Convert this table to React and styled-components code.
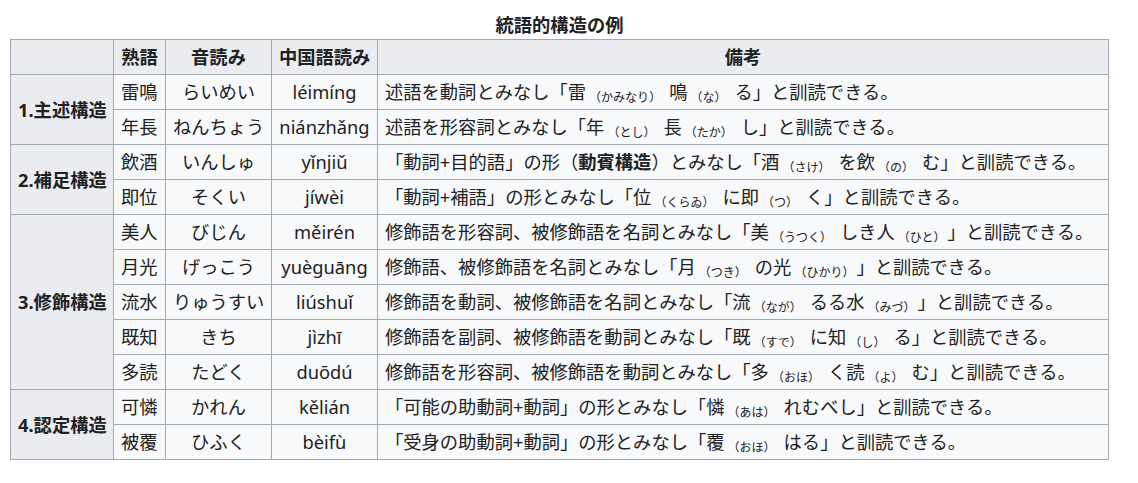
import React from "react";
import styled, { createGlobalStyle } from "styled-components";

const GlobalStyle = createGlobalStyle`
  html, body { margin: 0; padding: 0; background: #ffffff; }
  body {
    font-family: "Noto Sans", "Noto Sans CJK JP", sans-serif;
    color: #202122;
  }
`;

const Page = styled.div`
  padding: 11px 0 0 10px;
`;

const Table = styled.table`
  border-collapse: collapse;
  table-layout: fixed;
  width: 1099px;
  background: #f8f9fa;
  color: #202122;
  font-size: 18.3px;
  line-height: 28px;
  border: 1px solid #a2a9b1;
`;

const Caption = styled.caption`
  font-weight: bold;
  text-align: center;
  line-height: 28px;
`;

const Col = styled.col`
  width: ${(p) => (p.$w ? `${p.$w}px` : "auto")};
`;

const HeadCell = styled.th`
  background: #eaecf0;
  border: 1px solid #a2a9b1;
  padding: 3px 7px;
  font-weight: bold;
  text-align: center;
  vertical-align: middle;
  white-space: nowrap;
`;

const Cell = styled.td`
  border: 1px solid #a2a9b1;
  padding: 3px 7px;
  text-align: ${(p) => p.$align || "left"};
  vertical-align: middle;
  white-space: nowrap;
`;

const Reading = styled.span`
  font-size: 12px;
  line-height: 1;
  vertical-align: -3px;
  margin: 0 8px 0 3px;
`;

const Strong = styled.b`
  font-weight: bold;
`;

const groups = [
  {
    name: "1.主述構造",
    rows: [
      ["雷鳴", "らいめい", "léimíng", ["述語を動詞とみなし「雷", { r: "かみなり" }, "鳴", { r: "な" }, "る」と訓読できる。"]],
      ["年長", "ねんちょう", "niánzhǎng", ["述語を形容詞とみなし「年", { r: "とし" }, "長", { r: "たか" }, "し」と訓読できる。"]],
    ],
  },
  {
    name: "2.補足構造",
    rows: [
      ["飲酒", "いんしゅ", "yǐnjiǔ", ["「動詞+目的語」の形（", { b: "動賓構造" }, "）とみなし「酒", { r: "さけ" }, "を飲", { r: "の" }, "む」と訓読できる。"]],
      ["即位", "そくい", "jíwèi", ["「動詞+補語」の形とみなし「位", { r: "くらゐ" }, "に即", { r: "つ" }, "く」と訓読できる。"]],
    ],
  },
  {
    name: "3.修飾構造",
    rows: [
      ["美人", "びじん", "měirén", ["修飾語を形容詞、被修飾語を名詞とみなし「美", { r: "うつく" }, "しき人", { r: "ひと" }, "」と訓読できる。"]],
      ["月光", "げっこう", "yuèguāng", ["修飾語、被修飾語を名詞とみなし「月", { r: "つき" }, "の光", { r: "ひかり" }, "」と訓読できる。"]],
      ["流水", "りゅうすい", "liúshuǐ", ["修飾語を動詞、被修飾語を名詞とみなし「流", { r: "なが" }, "るる水", { r: "みづ" }, "」と訓読できる。"]],
      ["既知", "きち", "jìzhī", ["修飾語を副詞、被修飾語を動詞とみなし「既", { r: "すで" }, "に知", { r: "し" }, "る」と訓読できる。"]],
      ["多読", "たどく", "duōdú", ["修飾語を形容詞、被修飾語を動詞とみなし「多", { r: "おほ" }, "く読", { r: "よ" }, "む」と訓読できる。"]],
    ],
  },
  {
    name: "4.認定構造",
    rows: [
      ["可憐", "かれん", "kělián", ["「可能の助動詞+動詞」の形とみなし「憐", { r: "あは" }, "れむべし」と訓読できる。"]],
      ["被覆", "ひふく", "bèifù", ["「受身の助動詞+動詞」の形とみなし「覆", { r: "おほ" }, "はる」と訓読できる。"]],
    ],
  },
];

function Note({ parts }) {
  return parts.map((p, i) => {
    if (typeof p === "string") return <React.Fragment key={i}>{p}</React.Fragment>;
    if (p.r) return <Reading key={i}>（{p.r}）</Reading>;
    return <Strong key={i}>{p.b}</Strong>;
  });
}

export default function App() {
  return (
    <>
      <GlobalStyle />
      <Page>
        <Table>
          <Caption>統語的構造の例</Caption>
          <colgroup>
            <Col $w={103} />
            <Col $w={52} />
            <Col $w={106} />
            <Col $w={106} />
            <Col />
          </colgroup>
          <thead>
            <tr>
              <HeadCell />
              <HeadCell>熟語</HeadCell>
              <HeadCell>音読み</HeadCell>
              <HeadCell>中国語読み</HeadCell>
              <HeadCell>備考</HeadCell>
            </tr>
          </thead>
          <tbody>
            {groups.map((g) =>
              g.rows.map((row, i) => (
                <tr key={g.name + i}>
                  {i === 0 && <HeadCell rowSpan={g.rows.length}>{g.name}</HeadCell>}
                  <Cell>{row[0]}</Cell>
                  <Cell $align="center">{row[1]}</Cell>
                  <Cell $align="center">{row[2]}</Cell>
                  <Cell>
                    <Note parts={row[3]} />
                  </Cell>
                </tr>
              ))
            )}
          </tbody>
        </Table>
      </Page>
    </>
  );
}
